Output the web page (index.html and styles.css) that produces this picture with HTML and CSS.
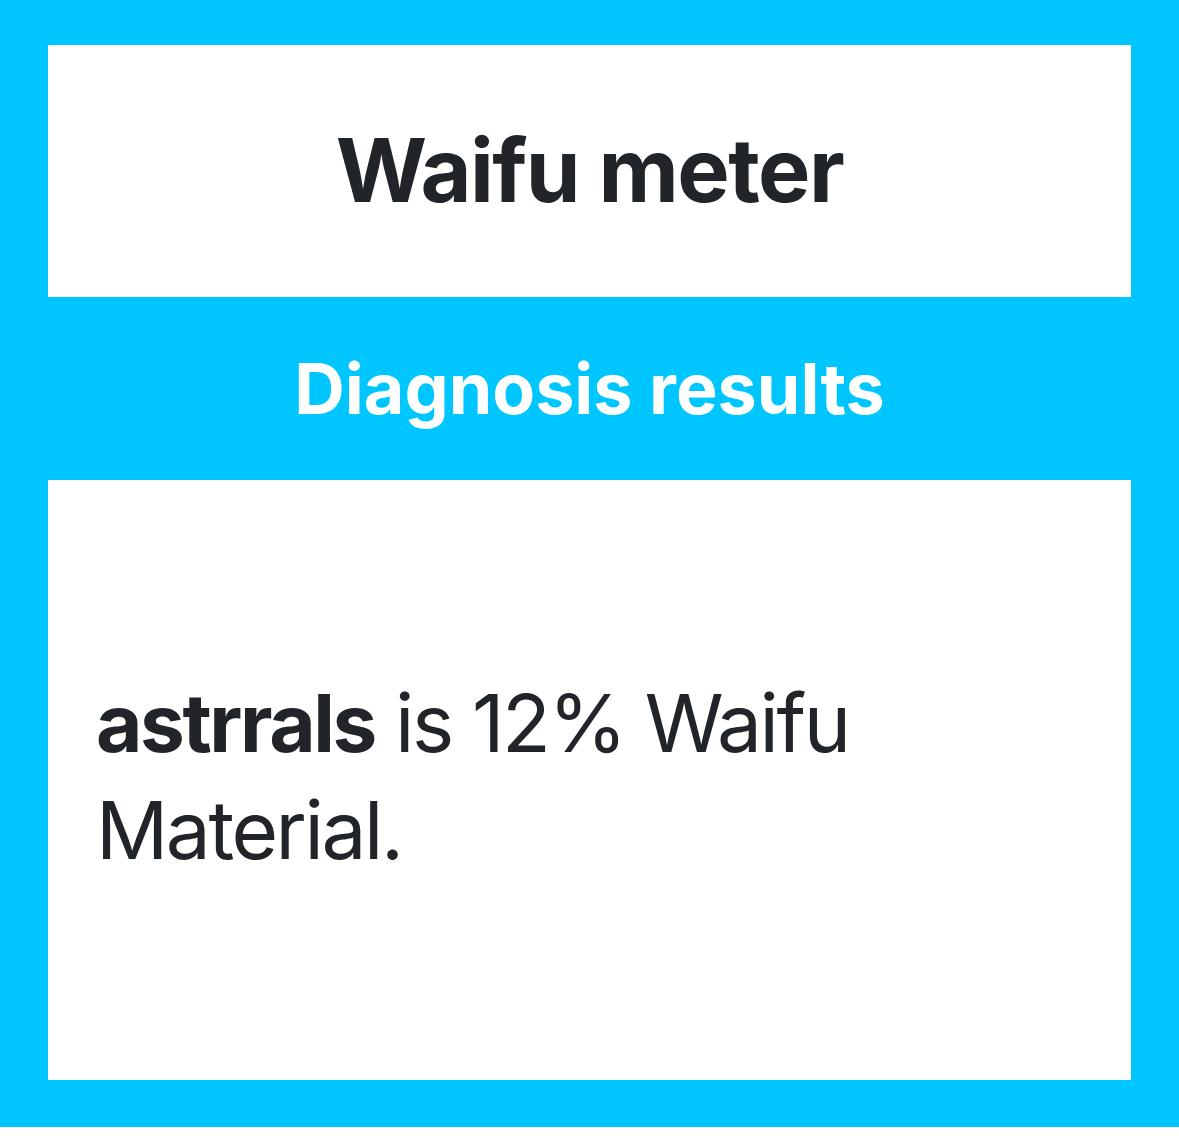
FILE: index.html
```html
<!DOCTYPE html>
<html lang="en">
<head>
  <meta charset="UTF-8">
  <meta name="viewport" content="width=device-width, initial-scale=1.0">
  <title>Waifu meter</title>
  <link rel="stylesheet" href="styles.css">
</head>
<body>
  <div class="page">
    <header class="title-card">
      <h1>Waifu meter</h1>
    </header>
    <h2 class="section-title">Diagnosis results</h2>
    <div class="result-card">
      <p class="result-text"><strong>astrrals</strong> is 12% Waifu Material.</p>
    </div>
  </div>
</body>
</html>
```

FILE: styles.css
```css
body {
  margin: 0;
  background-color: white;
  color: #212529;
  font-family: Inter, 'Noto Sans', sans-serif;
}
.page {
  background-color: #00c6ff;
  padding: 45px 48px 47px;
  height: 1127px;
  box-sizing: border-box;
  display: flex;
  flex-direction: column;
}
.title-card {
  background-color: white;
  height: 252px;
  display: flex;
  align-items: center;
  justify-content: center;
}
.title-card h1 {
  margin: 0;
  font-size: 88px;
  font-weight: 700;
  letter-spacing: -1.5px;
  line-height: 1;
  padding-bottom: 2px;
}
.section-title {
  margin: 0;
  height: 183px;
  display: flex;
  align-items: center;
  justify-content: center;
  color: white;
  font-size: 70px;
  font-weight: 700;
  letter-spacing: 0;
}
.result-card {
  background-color: white;
  flex: 1;
  padding: 0 48px;
  display: flex;
  align-items: center;
}
.result-text {
  margin: 0;
  max-width: 820px;
  font-size: 80px;
  line-height: 107px;
  letter-spacing: -2.4px;
  padding-bottom: 8px;
}
```
